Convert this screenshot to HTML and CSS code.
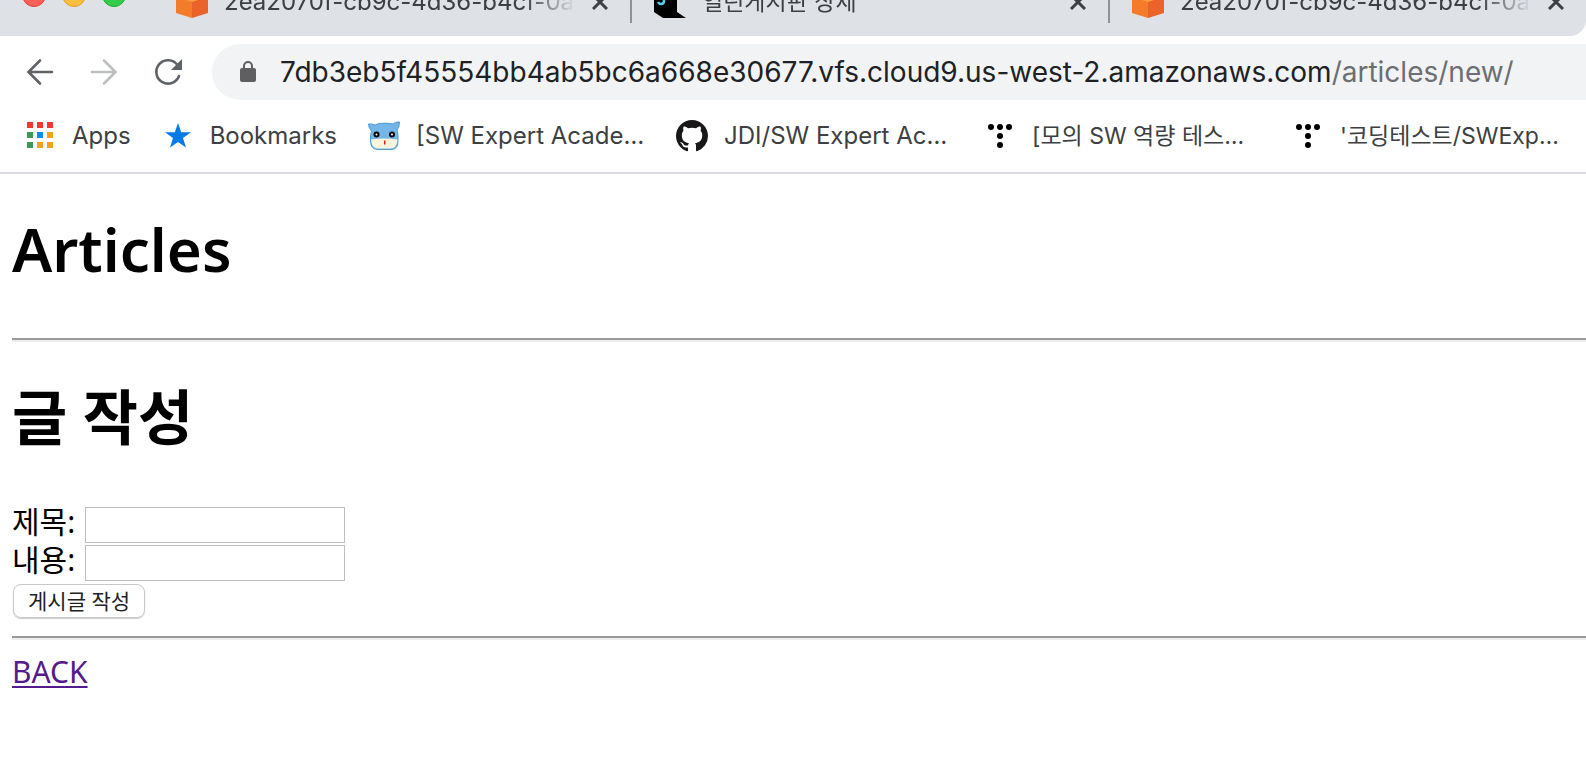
FILE: index.html
```html
<!DOCTYPE html>
<html lang="ko">
<head>
<meta charset="utf-8">
<title>Articles</title>
<link rel="stylesheet" href="styles.css">
</head>
<body>
<svg class="defs" aria-hidden="true">
  <symbol id="cube" viewBox="0 0 32 32">
    <path fill="#f47b2a" d="M0 4L16 0v32L0 27z"/>
    <path fill="#e9632a" d="M32 4L16 0v32l16-5z"/>
    <path fill="#f9a13d" d="M10 10h12v4l-6 2-6-2z"/>
  </symbol>
  <symbol id="close" viewBox="0 0 16 16">
    <path d="M1 1l14 14M15 1L1 15" fill="none" stroke="#3c4043" stroke-width="3"/>
  </symbol>
  <symbol id="tistory" viewBox="0 0 32 32">
    <circle cx="7" cy="7" r="3"/><circle cx="16" cy="7" r="3"/><circle cx="25" cy="7" r="3"/>
    <circle cx="16" cy="16" r="3"/><circle cx="16" cy="25" r="3"/>
  </symbol>
</svg>
<header class="browser">
  <div class="tab-strip">
    <div class="lights"><span class="light red"></span><span class="light yellow"></span><span class="light green"></span></div>
    <div class="tab">
      <svg class="icon"><use href="#cube"/></svg>
      <span class="tab-title">2ea2070f-cb9c-4d36-b4cf-0ae5</span>
      <button class="tab-close" aria-label="Close tab"><svg class="close-icon"><use href="#close"/></svg></button>
    </div>
    <div class="tab">
      <svg class="icon" viewBox="0 0 32 32"><path d="M0 0h23v26l9 6H9l-9-6z"/><path d="M10 9v6q0 3-3 3-2 0-3-2" fill="none" stroke="#5bcbf5" stroke-width="2.500"/></svg>
      <span class="tab-title hangul">열린게시판 상세</span>
      <button class="tab-close" aria-label="Close tab"><svg class="close-icon"><use href="#close"/></svg></button>
    </div>
    <div class="tab">
      <svg class="icon"><use href="#cube"/></svg>
      <span class="tab-title">2ea2070f-cb9c-4d36-b4cf-0ae5</span>
      <button class="tab-close" aria-label="Close tab"><svg class="close-icon"><use href="#close"/></svg></button>
    </div>
  </div>
  <div class="toolbar">
    <div class="nav">
      <button class="nav-button" aria-label="Back"><svg class="icon" viewBox="0 0 32 32"><path d="M28 16H5M16 4.500L4.500 16 16 27.500" fill="none" stroke="#5f6368" stroke-width="2.600" stroke-linecap="round"/></svg></button>
      <button class="nav-button" aria-label="Forward"><svg class="icon" viewBox="0 0 32 32"><path d="M4 16h23M16 4.500L27.500 16 16 27.500" fill="none" stroke="#bdbec0" stroke-width="2.600" stroke-linecap="round"/></svg></button>
      <button class="nav-button" aria-label="Reload"><svg class="icon" viewBox="0 0 32 32"><path d="M25.500 9A11.700 11.700 0 1 0 27 20" fill="none" stroke="#5f6368" stroke-width="2.600" stroke-linecap="round"/><path d="M30 3v11H19z" fill="#5f6368"/></svg></button>
    </div>
    <div class="address">
      <svg class="lock" viewBox="0 0 16 22"><rect y="7" width="16" height="14" rx="2" fill="#5f5f61"/><path d="M4 8V5a4 4 0 0 1 8 0v3" fill="none" stroke="#5f5f61" stroke-width="2"/></svg>
      <span class="url">7db3eb5f45554bb4ab5bc6a668e30677.vfs.cloud9.us-west-2.amazonaws.com<span class="path">/articles/new/</span></span>
    </div>
  </div>
  <nav class="bookmarks" aria-label="Bookmarks">
    <button class="bookmark">
      <svg class="icon" viewBox="0 0 32 32"><path fill="#f5372f" d="M3 2h6v6H3zM13 2h6v6h-6zM23 2h6v6h-6z"/><path fill="#3a9b56" d="M3 12h6v6H3zM3 22h6v6H3z"/><path fill="#0b8cf0" d="M13 12h6v6h-6z"/><path fill="#f5a11f" d="M23 12h6v6h-6zM13 22h6v6h-6zM23 22h6v6h-6z"/></svg>
      <span class="label">Apps</span>
    </button>
    <button class="bookmark">
      <svg class="icon" viewBox="0 0 32 32"><path fill="#027be8" d="M16 3l3.200 9.200H29l-8 5.800 3 9.500-8-5.500-8 5.500L11 18l-8-5.800h9.800z"/></svg>
      <span class="label">Bookmarks</span>
    </button>
    <button class="bookmark wide">
      <svg class="icon" viewBox="0 0 32 32"><path fill="#74b6e8" stroke="#4f9bd6" d="M.5 4q3-.5 6.500 1l4-1.500q8-1 14 .5 2-2.500 6.500-2 0 5-2.500 8 1.500 5 1 10 .5 9.500-7 9.500H9.500Q2.500 29 2.500 21 2 16 3.500 11 .5 8 .5 4z"/><path fill="#fcf5dc" d="M3 19.500q13-2 26.500 0-.5 9-7 9h-13Q3.500 28 3 19.500z"/><circle cx="8.500" cy="14.500" r="3"/><circle cx="24" cy="14.500" r="3"/><circle cx="8.500" cy="14.500" r="1" fill="#fff"/><circle cx="24" cy="14.500" r="1" fill="#fff"/><path fill="#e0201b" d="M16 20.500h1.500v4H16z"/></svg>
      <span class="label">[SW Expert Acade…</span>
    </button>
    <button class="bookmark wide">
      <svg class="icon" viewBox="0 0 16 16"><path fill="#191717" d="M8 0C3.580 0 0 3.580 0 8c0 3.540 2.290 6.530 5.470 7.590.4.070.55-.17.55-.38 0-.19-.01-.82-.01-1.490-2.010.37-2.530-.49-2.690-.94-.09-.23-.48-.94-.82-1.130-.28-.15-.68-.52-.01-.53.63-.01 1.080.58 1.230.82.72 1.210 1.870.87 2.330.66.07-.52.28-.87.51-1.070-1.780-.2-3.640-.89-3.640-3.950 0-.87.31-1.590.82-2.150-.08-.2-.36-1.020.08-2.120 0 0 .67-.21 2.200.82.64-.18 1.320-.27 2-.27s1.360.09 2 .27c1.530-1.040 2.200-.82 2.200-.82.44 1.100.16 1.920.08 2.120.51.56.82 1.270.82 2.150 0 3.070-1.870 3.750-3.650 3.950.29.25.54.73.54 1.480 0 1.070-.01 1.930-.01 2.200 0 .21.15.46.55.38A8.010 8.010 0 0 0 16 8c0-4.420-3.580-8-8-8z"/></svg>
      <span class="label">JDI/SW Expert Ac…</span>
    </button>
    <button class="bookmark wide">
      <svg class="icon"><use href="#tistory"/></svg>
      <span class="label hangul">[모의 SW 역량 테스…</span>
    </button>
    <button class="bookmark wide">
      <svg class="icon"><use href="#tistory"/></svg>
      <span class="label hangul">'코딩테스트/SWExp…</span>
    </button>
  </nav>
</header>
<main class="page">
  <h1 class="title">Articles</h1>
  <hr class="rule">
  <h1 class="title">글 작성</h1>
  <form class="form">
    <div class="field"><label for="title">제목:</label><input class="text-box" id="title" type="text"></div>
    <div class="field"><label for="content">내용:</label><input class="text-box" id="content" type="text"></div>
    <button class="submit" type="button">게시글 작성</button>
  </form>
  <hr class="rule">
  <a class="back" href="#">BACK</a>
</main>
</body>
</html>
```
FILE: styles.css
```css
* { box-sizing: border-box; }

body {
  margin: 0;
  background: #fff;
  overflow: hidden;
}

button {
  border: 0;
  padding: 0;
  background: none;
  font: inherit;
  color: inherit;
}

svg { display: block; flex: none; }
.defs { position: absolute; width: 0; height: 0; }
.icon { width: 32px; height: 32px; flex: none; }

.browser {
  font-family: Inter, "Noto Sans CJK KR", sans-serif;
  font-size: 24px;
  color: #3c4043;
  border-bottom: 2px solid #dadae0;
}
.hangul { font-size: 23px; }

/* Tabs */
.tab-strip {
  display: flex;
  align-items: flex-end;
  height: 36px;
  padding-bottom: 13px;
  overflow: hidden;
  background: #dee1e6;
  border-bottom-right-radius: 16px;
}
.lights {
  display: flex;
  flex: none;
  gap: 16px;
  width: 154px;
  padding: 0 0 16px 22px;
}
.light { width: 24px; height: 24px; border-radius: 50%; border: 1px solid; }
.red { background: #fe5f58; border-color: #e2463f; }
.yellow { background: #fdbd3f; border-color: #dfa023; }
.green { background: #35cb4b; border-color: #1dad2b; }
.tab {
  box-sizing: content-box;
  display: flex;
  flex: 1 1 0;
  align-items: center;
  min-width: 0;
  height: 42px;
  padding: 0 22px;
}
.tab + .tab { border-left: 2px solid #8e9196; }
.tab-title {
  flex: 1;
  min-width: 0;
  margin: 0 16px;
  overflow: hidden;
  white-space: nowrap;
  line-height: 32px;
  mask-image: linear-gradient(to right, #000 calc(100% - 52px), transparent);
}
.close-icon { width: 16px; height: 16px; }

/* Address row */
.toolbar { display: flex; padding-top: 8px; }
.nav {
  display: flex;
  flex: none;
  align-items: center;
  gap: 32px;
  padding: 0 28px 0 24px;
}
.nav-button { display: block; }
.address {
  display: flex;
  flex: 1;
  align-items: center;
  gap: 24px;
  min-width: 0;
  height: 56px;
  padding-left: 28px;
  border-radius: 28px 0 0 28px;
  background: #f1f3f4;
}
.lock { width: 16px; height: 22px; }
.url { font-size: 28px; color: #202124; white-space: nowrap; }
.path { color: #6b6e72; }

/* Bookmark row */
.bookmarks {
  display: flex;
  align-items: center;
  gap: 31px;
  height: 72px;
  padding-left: 24px;
  overflow: hidden;
}
.bookmark {
  display: flex;
  flex: none;
  align-items: center;
  gap: 16px;
  white-space: nowrap;
}
.label { line-height: 32px; }
.wide { width: 277px; }

/* Document */
.page {
  padding: 0 0 24px 12px;
  font-family: "Noto Sans", "Noto Sans CJK KR", sans-serif;
  font-size: 30px;
  color: #000;
}
.title {
  margin: 0;
  padding: 31px 0 45px;
  font-size: 60px;
  font-weight: 600;
  line-height: 88px;
}
.rule {
  height: 4px;
  margin: 0;
  border: 0;
  border-top: 2px solid #9a9a9a;
  border-bottom: 2px solid #eee;
}
.form { padding-top: 1px; }
.field { display: flex; gap: 10px; height: 38px; line-height: 30px; }
.text-box {
  width: 260px;
  height: 36px;
  padding: 4px;
  border: 1px solid #bebebe;
  font: inherit;
  font-size: 22px;
}
.submit {
  display: block;
  height: 34px;
  margin: 1px 0 18px 1px;
  padding: 0 14px;
  border: 1px solid #c8c8c8;
  border-radius: 8px;
  box-shadow: 0 1px 1px #ccc;
  font-size: 21px;
  line-height: 32px;
  color: #222;
}
.back { display: inline-block; color: #551a8b; line-height: 64px; text-underline-offset: 3px; text-decoration-thickness: 2px; }
```
